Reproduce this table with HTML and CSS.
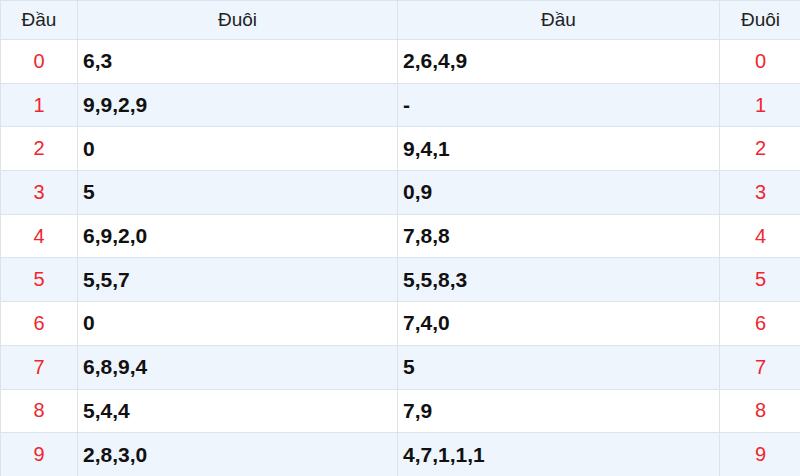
FILE: index.html
```html
<!DOCTYPE html>
<html lang="vi">
<head>
<meta charset="utf-8">
<link rel="stylesheet" href="styles.css">
</head>
<body>
<table class="lt">
  <colgroup>
    <col class="c1"><col class="c2"><col class="c3"><col class="c4">
  </colgroup>
  <thead>
    <tr><th>Đầu</th><th>Đuôi</th><th>Đầu</th><th>Đuôi</th></tr>
  </thead>
  <tbody>
    <tr><td class="n">0</td><td class="v">6,3</td><td class="v">2,6,4,9</td><td class="n">0</td></tr>
    <tr><td class="n">1</td><td class="v">9,9,2,9</td><td class="v">-</td><td class="n">1</td></tr>
    <tr><td class="n">2</td><td class="v">0</td><td class="v">9,4,1</td><td class="n">2</td></tr>
    <tr><td class="n">3</td><td class="v">5</td><td class="v">0,9</td><td class="n">3</td></tr>
    <tr><td class="n">4</td><td class="v">6,9,2,0</td><td class="v">7,8,8</td><td class="n">4</td></tr>
    <tr><td class="n">5</td><td class="v">5,5,7</td><td class="v">5,5,8,3</td><td class="n">5</td></tr>
    <tr><td class="n">6</td><td class="v">0</td><td class="v">7,4,0</td><td class="n">6</td></tr>
    <tr><td class="n">7</td><td class="v">6,8,9,4</td><td class="v">5</td><td class="n">7</td></tr>
    <tr><td class="n">8</td><td class="v">5,4,4</td><td class="v">7,9</td><td class="n">8</td></tr>
    <tr><td class="n">9</td><td class="v">2,8,3,0</td><td class="v">4,7,1,1,1</td><td class="n">9</td></tr>
  </tbody>
</table>
</body>
</html>
```
FILE: styles.css
```css
html, body {
  margin: 0;
  padding: 0;
  background: #ffffff;
}
.lt {
  border-collapse: collapse;
  table-layout: fixed;
  width: 801px;
  font-family: "Liberation Sans", Arial, sans-serif;
  color: #111;
}
.c1 { width: 77px; }
.c2 { width: 320px; }
.c3 { width: 322px; }
.c4 { width: 82px; }
.lt th, .lt td {
  border: 1px solid #dde3ea;
  padding: 0 5px;
}
.lt th {
  height: 38px;
  background: #eef5fd;
  font-weight: normal;
  font-size: 19px;
  color: #222;
  text-align: center;
}
.lt td {
  height: 42.7px;
}
.lt tbody tr:nth-child(even) td {
  background: #eef5fd;
}
.n {
  text-align: center;
  color: #f0262f;
  font-size: 20px;
}
.v {
  font-weight: bold;
  text-align: left;
  font-size: 21px;
}
```
